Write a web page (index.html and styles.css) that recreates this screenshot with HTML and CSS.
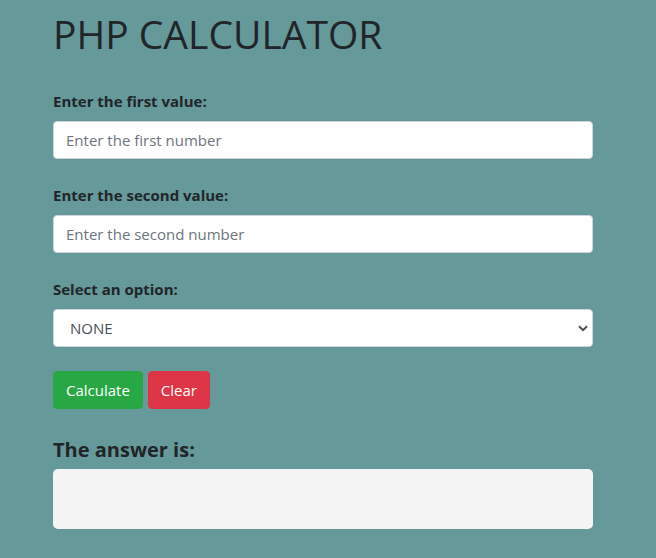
FILE: index.html
```html
<!DOCTYPE html>
<html lang="en">
<head>
<meta charset="utf-8">
<title>PHP Calculator</title>
<link rel="stylesheet" href="styles.css">
</head>
<body>
<main class="container">
  <h1 class="title">PHP CALCULATOR</h1>
  <form class="calc-form">
    <div class="form-group">
      <label class="label" for="n1">Enter the first value:</label>
      <input class="form-control" id="n1" type="text" placeholder="Enter the first number">
    </div>
    <div class="form-group">
      <label class="label" for="n2">Enter the second value:</label>
      <input class="form-control" id="n2" type="text" placeholder="Enter the second number">
    </div>
    <div class="form-group">
      <label class="label" for="op">Select an option:</label>
      <div class="select-wrap">
        <select class="form-control select" id="op">
          <option>NONE</option>
          <option>ADD</option>
          <option>SUBTRACT</option>
          <option>MULTIPLY</option>
          <option>DIVIDE</option>
        </select>
        <svg class="chevron" width="10" height="7" viewBox="0 0 10 7" aria-hidden="true"><path d="M1 1.2 L5 5.2 L9 1.2" fill="none" stroke="#4a4f55" stroke-width="2"/></svg>
      </div>
    </div>
    <div class="buttons">
      <button type="button" class="btn btn-success">Calculate</button>
      <button type="button" class="btn btn-danger">Clear</button>
    </div>
  </form>
  <h2 class="answer-title">The answer is:</h2>
  <div class="answer-box"></div>
</main>
</body>
</html>
```

FILE: styles.css
```css
* { box-sizing: border-box; }
html, body {
  margin: 0;
  padding: 0;
  background: #669999;
}
body {
  font-family: "Open Sans", "Noto Sans", "Liberation Sans", sans-serif;
  font-size: 16px;
  line-height: 1.5;
  color: #212529;
}
.container {
  width: 540px;
  margin-left: 53px;
  padding-top: 10px;
}
.title {
  margin: 0 0 31px;
  font-size: 39px;
  font-weight: 400;
  line-height: 48px;
}
.form-group {
  margin-bottom: 24px;
}
.label {
  display: block;
  margin-bottom: 8px;
  font-weight: 700;
  font-size: 15px;
  line-height: 24px;
}
.form-control {
  display: block;
  width: 100%;
  height: 38px;
  padding: 6px 12px;
  font-family: inherit;
  font-size: 15px;
  line-height: 24px;
  color: #495057;
  background: #fff;
  border: 1px solid #ced4da;
  border-radius: 4px;
  outline: none;
}
.form-control::placeholder {
  color: #6c757d;
  opacity: 1;
}
.select-wrap {
  position: relative;
}
.select {
  appearance: none;
  -webkit-appearance: none;
  padding-left: 16px;
}
.chevron {
  position: absolute;
  right: 5px;
  top: 16px;
  pointer-events: none;
}
.buttons {
  display: flex;
  gap: 5px;
}
.btn {
  height: 38px;
  padding: 6px 12px;
  font-family: inherit;
  font-size: 15px;
  line-height: 24px;
  color: #fff;
  border: 1px solid transparent;
  border-radius: 4px;
}
.btn-success { background: #28a745; border-color: #28a745; }
.btn-danger { background: #dc3545; border-color: #dc3545; }
.answer-title {
  margin: 26px 0 5px;
  font-size: 20px;
  font-weight: 700;
  line-height: 29px;
}
.answer-box {
  height: 60px;
  background: #f4f4f4;
  border-radius: 5px;
}
```
